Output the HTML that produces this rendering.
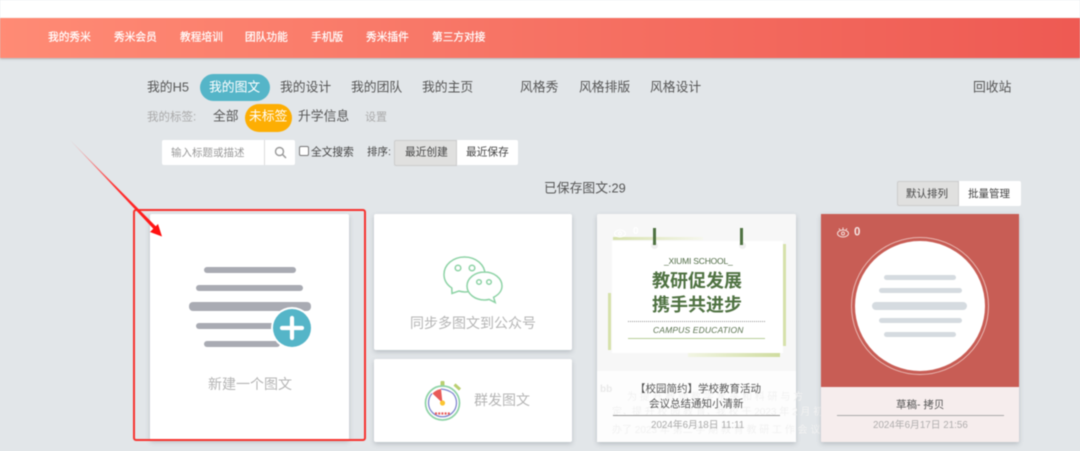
<!DOCTYPE html>
<html lang="zh"><head><meta charset="utf-8"><title>秀米</title>
<style>
html,body{margin:0;padding:0}
body{width:1080px;height:451px;position:relative;overflow:hidden;background:#e2e6e9;font-family:"Liberation Sans","Noto Sans CJK SC",sans-serif;color:#555}
.t{position:absolute;white-space:nowrap;line-height:1;transform:translateY(-50%)}
.b{position:absolute;box-sizing:border-box}
.card{position:absolute;background:#fff;border-radius:2px;box-shadow:0 2px 5px rgba(90,100,110,.3)}
.r{position:absolute;border-radius:4px}
.blur{position:absolute;left:0;top:0;width:1080px;height:451px;filter:blur(.5px)}
.h{font-size:10.7px;color:#fff;top:37.500px;-webkit-text-stroke:.2px #fff}
</style></head><body>
<div class="blur">
<div class="b" style="left:0;top:0;width:1080px;height:18px;background:#fff"></div>
<div class="b" style="left:0;top:18px;width:1080px;height:40px;background:linear-gradient(90deg,#ff8b75,#ee5a53);box-shadow:0 1px 2px rgba(80,80,80,.35)"></div>
<div class="t h" style="left:48px">我的秀米</div>
<div class="t h" style="left:114px">秀米会员</div>
<div class="t h" style="left:180px">教程培训</div>
<div class="t h" style="left:245px">团队功能</div>
<div class="t h" style="left:311px">手机版</div>
<div class="t h" style="left:366px">秀米插件</div>
<div class="t h" style="left:432px">第三方对接</div>

<div class="t" style="left:147px;top:88px;font-size:12.8px">我的H5</div>
<div class="b" style="left:200px;top:74px;width:70px;height:27px;border-radius:14px;background:#55b5c8"></div>
<div class="t" style="left:209px;top:88px;font-size:12.8px;color:#fff">我的图文</div>
<div class="t" style="left:280px;top:88px;font-size:12.8px">我的设计</div>
<div class="t" style="left:351px;top:88px;font-size:12.8px">我的团队</div>
<div class="t" style="left:422px;top:88px;font-size:12.8px">我的主页</div>
<div class="t" style="left:520px;top:88px;font-size:12.8px">风格秀</div>
<div class="t" style="left:579px;top:88px;font-size:12.8px">风格排版</div>
<div class="t" style="left:650px;top:88px;font-size:12.8px">风格设计</div>
<div class="t" style="left:973px;top:88px;font-size:12.8px">回收站</div>

<div class="t" style="left:147px;top:118px;font-size:11.5px;color:#aaa">我的标签:</div>
<div class="t" style="left:213px;top:117px;font-size:12.8px">全部</div>
<div class="b" style="left:245px;top:104px;width:47px;height:28px;border-radius:14px;background:#fdae03"></div>
<div class="t" style="left:249px;top:117px;font-size:12.8px;color:#fff">未标签</div>
<div class="t" style="left:298px;top:117px;font-size:12.8px">升学信息</div>
<div class="t" style="left:365px;top:118px;font-size:11px;color:#aaa">设置</div>

<div class="b" style="left:162px;top:140px;width:133px;height:25px;background:#fff;border-radius:2px"></div>
<div class="b" style="left:264px;top:140px;width:1px;height:25px;background:#ddd"></div>
<div class="t" style="left:171px;top:153px;font-size:10.5px;color:#999">输入标题或描述</div>
<svg class="b" style="left:274px;top:146px" width="13" height="13" viewBox="0 0 13 13" fill="none" stroke="#999" stroke-width="1.4"><circle cx="5.5" cy="5.5" r="4"/><path d="M8.5 8.5L12 12"/></svg>
<div class="b" style="left:299px;top:146px;width:10px;height:10px;background:#fff;border:1px solid #777;border-radius:2px"></div>
<div class="t" style="left:311px;top:153px;font-size:10.700px;color:#444">全文搜索</div>
<div class="t" style="left:367px;top:152px;font-size:10.500px;color:#444">排序:</div>
<div class="b" style="left:394px;top:140px;width:63px;height:26px;background:#e0e0df;border:1px solid #ccc;border-radius:2px 0 0 2px"></div>
<div class="b" style="left:457px;top:140px;width:61px;height:25px;background:#fff;border-radius:0 2px 2px 0"></div>
<div class="t" style="left:405px;top:153px;font-size:10.700px;color:#444">最近创建</div>
<div class="t" style="left:466px;top:153px;font-size:10.700px;color:#444">最近保存</div>

<div class="t" style="left:544px;top:189px;font-size:12.8px">已保存图文:29</div>
<div class="b" style="left:897px;top:181px;width:62px;height:25px;background:#e0e0df;border:1px solid #ccc;border-radius:2px 0 0 2px"></div>
<div class="b" style="left:959px;top:181px;width:62px;height:25px;background:#fff;border-radius:0 2px 2px 0"></div>
<div class="t" style="left:906px;top:194px;font-size:10.500px;color:#444">默认排列</div>
<div class="t" style="left:968px;top:194px;font-size:10.500px;color:#444">批量管理</div>

<!-- new card -->
<div class="card" style="left:150px;top:214px;width:199px;height:226px"></div>
<div class="r" style="left:204px;top:267px;width:92px;height:6px;background:#a9abb3"></div>
<div class="r" style="left:196px;top:285px;width:107px;height:6px;background:#a9abb3"></div>
<div class="r" style="left:189px;top:302px;width:122px;height:9px;background:#a9abb3"></div>
<div class="r" style="left:196px;top:323px;width:90px;height:6px;background:#a9abb3"></div>
<div class="r" style="left:204px;top:341px;width:76px;height:6px;background:#a9abb3"></div>
<svg class="b" style="left:270px;top:306px" width="44" height="44" viewBox="0 0 44 44"><circle cx="22" cy="22" r="21" fill="#fff"/><circle cx="22" cy="22" r="19" fill="#55b5c8"/><path d="M22 12V32M12 22H32" stroke="#fff" stroke-width="4.200" stroke-linecap="round"/></svg>
<div class="t" style="left:208px;top:384px;font-size:14px;color:#b5b5b5">新建一个图文</div>

<!-- sync card -->
<div class="card" style="left:374px;top:214px;width:198px;height:136px"></div>
<svg class="b" style="left:440px;top:254px" width="64" height="52" viewBox="0 0 64 52" fill="none" stroke="#8ed3a6" stroke-width="1.500"><path d="M24.500 3C13 3 4 10.800 4 20.500C4 26 7 30.800 11.800 34L12 39.500L18.800 37C21 37.600 22.800 37.900 25 38C34 38 45 30 45 20.500C45 10.800 36 3 24.500 3Z" fill="#fff"/><path d="M44.500 18C34.800 18 27 24.300 27 32C27 39.700 34.800 46 44.500 46C46.200 46 47.800 45.800 49.200 45.400L55.200 48.500L53.600 43.300C58.600 40.800 62 36.700 62 32C62 24.300 54.200 18 44.500 18Z" fill="#fff"/><circle cx="18" cy="14" r="2.800"/><circle cx="32" cy="14" r="2.800"/><circle cx="39" cy="28" r="2.300"/><circle cx="49" cy="28" r="2.300"/></svg>
<div class="t" style="left:410px;top:323px;font-size:14px;color:#b5b5b5">同步多图文到公众号</div>

<!-- timer card -->
<div class="card" style="left:374px;top:359px;width:198px;height:83px"></div>
<svg class="b" style="left:420px;top:375px" width="50" height="50" viewBox="0 0 50 50" fill="none"><rect x="20.500" y="6" width="4" height="5.500" rx="1" fill="#b9cf70"/><path d="M34.500 9.500L40 14.500" stroke="#b9cf70" stroke-width="3"/><circle cx="22.500" cy="28" r="17" stroke="#8ed3a6" stroke-width="1.700" fill="#fff"/><path d="M12 18.500A14 14 0 1 0 33 18.500Q28 14.500 21 14" stroke="#7f86cf" stroke-width="1.300"/><path d="M22.500 28L12.500 18.500Q16 14.800 21 14Z" fill="#e85a58"/><circle cx="22.500" cy="28" r="2.600" fill="#fbc531"/><path d="M15 38.500H30" stroke="#e85a58" stroke-width="2.200" stroke-dasharray="2 1.200"/></svg>
<div class="t" style="left:474px;top:400px;font-size:14px;color:#b5b5b5">群发图文</div>

<!-- green card -->
<div class="card" style="left:597px;top:214px;width:199px;height:228px;background:#f7f7f7;overflow:hidden"></div>
<div class="b" style="left:612px;top:241px;width:171px;height:112px;background:#fff"></div>
<div class="b" style="left:613px;top:237px;width:90px;height:3px;background:linear-gradient(90deg,#d6e1ab,#f6f7ee)"></div>
<div class="b" style="left:783px;top:244px;width:3px;height:102px;background:#d6e1ab"></div>
<div class="b" style="left:608px;top:293px;width:3px;height:57px;background:#d6e1ab"></div>
<div class="b" style="left:688px;top:353px;width:92px;height:4px;background:linear-gradient(90deg,#f2f5e4,#cfdc9f)"></div>
<div class="b" style="left:651px;top:242px;width:7px;height:7px;border-radius:50%;background:#f0f0f0"></div>
<div class="b" style="left:739px;top:242px;width:7px;height:7px;border-radius:50%;background:#f0f0f0"></div>
<div class="b" style="left:653px;top:228px;width:3px;height:17px;background:#4f7242"></div>
<div class="b" style="left:740px;top:228px;width:3px;height:17px;background:#4f7242"></div>
<svg class="b" style="left:613px;top:226px" width="14" height="12" viewBox="0 0 14 12" fill="none" stroke="#fff" stroke-width="1"><ellipse cx="7" cy="7.500" rx="5.500" ry="3.500"/><circle cx="7" cy="7.500" r="1.500"/></svg>
<div class="t" style="left:633px;top:232px;font-size:10px;font-weight:700;color:#fff">0</div>
<div class="t" style="left:664px;top:261px;font-size:8.500px;color:#4f6b45;letter-spacing:-.2px">_XIUMI SCHOOL_</div>
<div class="t" style="left:652px;top:281px;font-size:18px;font-weight:700;color:#4f7242">教研促发展</div>
<div class="t" style="left:652px;top:305px;font-size:18px;font-weight:700;color:#4f7242">携手共进步</div>
<div class="b" style="left:628px;top:321px;width:137px;height:0;border-top:1.500px dotted #999"></div>
<div class="t" style="left:653px;top:330px;font-size:8.500px;font-style:italic;color:#5a7350;letter-spacing:.15px">CAMPUS EDUCATION</div>
<div class="b" style="left:628px;top:338px;width:137px;height:1px;background:#b9cf9a"></div>
<div class="b" style="left:597px;top:371px;width:199px;height:71px;background:#fdfdfd"></div>
<div class="t" style="left:600px;top:390px;font-size:10px;color:#e9e9e9;font-weight:700">bb</div>
<div class="t" style="left:627px;top:398px;font-size:10px;color:#f1f1f1">为 提 升 教 师 教 学 水 平 和 科 研 与 方</div>
<div class="t" style="left:612px;top:413px;font-size:10px;color:#f1f1f1">定，提 升 校 园 教 育，我 校 于 2023 年 2 月 初</div>
<div class="t" style="left:612px;top:431px;font-size:10px;color:#f1f1f1">办了 2023 年 第二 学 期 教 育 教 研 工 作 会 议，</div>
<div class="t" style="left:635px;top:389px;font-size:10.500px;color:#555">【校园简约】学校教育活动</div>
<div class="t" style="left:649px;top:404px;font-size:10.500px;color:#555">会议总结通知小清新</div>
<div class="b" style="left:613px;top:415px;width:167px;height:1px;background:#999"></div>
<div class="t" style="left:651px;top:426px;font-size:9.800px;color:#aaa">2024年6月18日 11:11</div>

<!-- red card -->
<div class="card" style="left:821px;top:214px;width:198px;height:228px;background:#f6eded;border-radius:1px"></div>
<div class="b" style="left:821px;top:214px;width:198px;height:173px;background:#c85d55"></div>
<svg class="b" style="left:836px;top:226px" width="14" height="12" viewBox="0 0 14 12" fill="none" stroke="#f3dcd9" stroke-width="1"><ellipse cx="7" cy="7.500" rx="5.500" ry="3.500"/><circle cx="7" cy="7.500" r="1.500"/><path d="M3 2.500L4 4M7 1.500V3.500M11 2.500L10 4"/></svg>
<div class="t" style="left:854px;top:233px;font-size:11.500px;font-weight:700;color:#f6e4e2">0</div>
<div class="b" style="left:851px;top:237px;width:138px;height:138px;border-radius:50%;border:1.500px solid #e8b7b2"></div>
<div class="b" style="left:855px;top:241px;width:130px;height:130px;border-radius:50%;background:#fff"></div>
<div class="r" style="left:884px;top:275px;width:72px;height:5px;background:#d5dbe0"></div>
<div class="r" style="left:879px;top:288px;width:83px;height:5px;background:#d5dbe0"></div>
<div class="r" style="left:872px;top:302px;width:95px;height:8px;background:#d5dbe0"></div>
<div class="r" style="left:879px;top:318px;width:83px;height:5px;background:#d5dbe0"></div>
<div class="r" style="left:884px;top:332px;width:72px;height:5px;background:#d5dbe0"></div>
<div class="t" style="left:896px;top:405px;font-size:10.500px;color:#555">草稿- 拷贝</div>
<div class="b" style="left:837px;top:415px;width:167px;height:1px;background:#aaa"></div>
<div class="t" style="left:873px;top:426px;font-size:9.800px;color:#b0aeae">2024年6月17日 21:56</div>

<!-- annotation -->
<div class="b" style="left:133px;top:209px;width:233px;height:232px;border:2px solid #f6332e;border-radius:3px"></div>
<svg class="b" style="left:0;top:0" width="1080" height="451" viewBox="0 0 1080 451"><defs><linearGradient id="a" x1="70" y1="140" x2="160" y2="235" gradientUnits="userSpaceOnUse"><stop offset="0" stop-color="#f55" stop-opacity=".25"/><stop offset=".5" stop-color="#f33"/><stop offset="1" stop-color="#f11"/></linearGradient></defs><path d="M70 140L156.500 227L154 229.500Z" fill="url(#a)"/><path d="M162 236.500L150 232L158 224Z" fill="#f11"/></svg>
</div>
</body></html>
